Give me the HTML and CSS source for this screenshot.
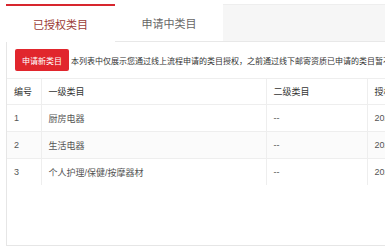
FILE: index.html
```html
<!DOCTYPE html>
<html lang="zh-CN">
<head>
    <meta charset="UTF-8">
    <meta name="viewport" content="width=device-width, initial-scale=1.0">
    <title>类目管理</title>
    <link rel="stylesheet" href="styles.css">
</head>
<body>
    <div class="panel">
        <div class="tabs">
            <div class="tab active">已授权类目</div>
            <div class="tab">申请中类目</div>
        </div>
        <div class="toolbar">
            <button class="btn-apply" type="button">申请新类目</button>
            <p class="notice">本列表中仅展示您通过线上流程申请的类目授权，之前通过线下邮寄资质已申请的类目暂不在此展示</p>
        </div>
        <table class="grid">
            <colgroup>
                <col class="c-no">
                <col class="c-first">
                <col class="c-second">
                <col class="c-date">
            </colgroup>
            <thead>
                <tr><th>编号</th><th>一级类目</th><th>二级类目</th><th>授权时间</th></tr>
            </thead>
            <tbody>
                <tr><td>1</td><td>厨房电器</td><td>--</td><td>2021-03-12</td></tr>
                <tr><td>2</td><td>生活电器</td><td>--</td><td>2021-03-12</td></tr>
                <tr><td>3</td><td>个人护理/保健/按摩器材</td><td>--</td><td>2021-03-12</td></tr>
            </tbody>
        </table>
    </div>
</body>
</html>
```

FILE: styles.css
```css
html, body { overflow: hidden; }
body {
    margin: 4px 0 0 6px;
    background: #fff;
    font-family: "Liberation Sans", "Noto Sans CJK SC", sans-serif;
    color: #333;
}
.panel {
    width: 440px; height: 242px;
    border: 1px solid #e6e6e6; border-top: none; border-right: none;
    box-sizing: border-box;
}
.tabs {
    display: flex; height: 38px;
    background: #f6f6f6;
    border-top: 1px solid #eee; border-bottom: 1px solid #e8e8e8;
    box-sizing: border-box;
}
.tab {
    width: 108px; display: flex; align-items: center; justify-content: center;
    font-size: 11px; color: #666; background: #fff;
    margin-top: -1px;
}
.tab.active {
    width: 109px; margin-left: -1px; margin-bottom: -1px;
    border-top: 2px solid #d7262e; color: #9b3b37;
}
.toolbar { display: flex; align-items: center; gap: 2px; padding: 7px 8px; }
.btn-apply {
    height: 22px; padding: 0 7px; border: none; border-radius: 2px;
    background: #e1262d; color: #fff; font-size: 8px; font-family: inherit;
    white-space: nowrap;
}
.notice { margin: 0; font-size: 8px; color: #333; white-space: nowrap; }
.grid {
    width: 430px; table-layout: fixed; border-collapse: collapse;
    font-size: 9px;
}
.c-no { width: 34px; }
.c-first { width: 225px; }
.c-second { width: 101px; }
.c-date { width: 70px; }
.grid th, .grid td {
    padding: 0 7px; text-align: left; white-space: nowrap;
    border-left: 1px solid #eee; border-top: 1px solid #eee;
}
.grid th:first-child, .grid td:first-child { border-left: none; }
.grid th { height: 25px; font-weight: normal; color: #333; }
.grid td { height: 26px; color: #555; }
.grid tbody tr:nth-child(even) td { background: #fbfbfb; }
```
